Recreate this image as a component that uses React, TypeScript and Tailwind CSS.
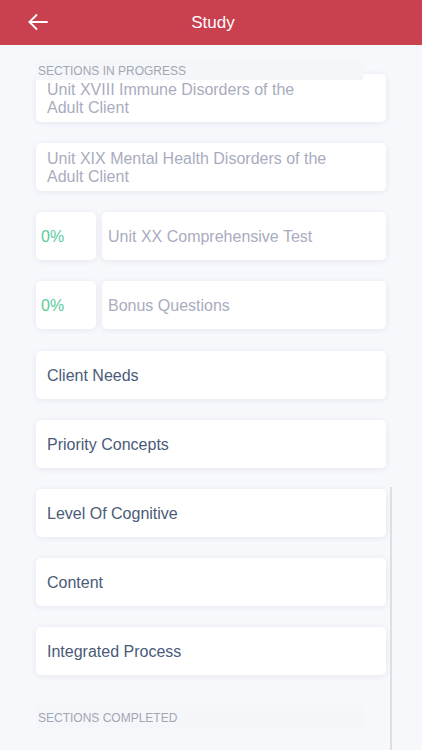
import React from "react";

const font = { fontFamily: '"Liberation Sans", Arial, sans-serif' };

function Card({ children, className = "" }: { children: React.ReactNode; className?: string }) {
  return (
    <div
      className={
        "bg-white rounded-[5px] h-[48px] flex items-center pt-[2px] shadow-[0_1px_6px_rgba(60,70,100,0.09)] " + className
      }
    >
      {children}
    </div>
  );
}

export default function App() {
  const plain = ["Client Needs", "Priority Concepts", "Level Of Cognitive", "Content", "Integrated Process"];
  return (
    <div style={font} className="relative w-[422px] h-[750px] overflow-hidden bg-[#f7f8fc]">
      <div className="h-[45px] bg-[#c9404f] flex items-center justify-center relative">
        <svg
          className="absolute left-[27px] top-[13px]"
          width="22"
          height="18"
          viewBox="0 0 22 18"
          fill="none"
          stroke="white"
          strokeWidth="1.8"
          strokeLinecap="round"
          strokeLinejoin="round"
        >
          <path d="M20 9H2.5" />
          <path d="M9.5 2L2.5 9l7 7" />
        </svg>
        <span className="text-white text-[17px] pl-[4px]">Study</span>
      </div>

      <div className="px-[36px] pt-[16px] flex flex-col">
        <div className="-mb-[6px] relative z-10">
          <div className="w-[327px] h-[19px] bg-[#f4f6fa] flex items-center pl-[2px] text-[12px] leading-none text-[#a2a6b2]">
            SECTIONS IN PROGRESS
          </div>
        </div>
        <div className="flex flex-col gap-[21px]">
          <Card className="px-[11px]">
            <span className="text-[16px] leading-[18px] text-[#a9acbe]">
              Unit XVIII Immune Disorders of the
              <br />
              Adult Client
            </span>
          </Card>
          <Card className="px-[11px]">
            <span className="text-[16px] leading-[18px] text-[#a9acbe]">
              Unit XIX Mental Health Disorders of the
              <br />
              Adult Client
            </span>
          </Card>
          {["Unit XX Comprehensive Test", "Bonus Questions"].map((t) => (
            <div key={t} className="flex gap-[6px]">
              <Card className="w-[60px] px-[5px]">
                <span className="text-[16px] text-[#5ccb9b]">0%</span>
              </Card>
              <Card className="flex-1 px-[6px]">
                <span className="text-[16px] text-[#a9acbe]">{t}</span>
              </Card>
            </div>
          ))}
          <div className="flex flex-col gap-[21px] mt-[1px]">
            {plain.map((t) => (
              <Card key={t} className="px-[11px]">
                <span className="text-[16px] text-[#4a5b78]">{t}</span>
              </Card>
            ))}
          </div>
        </div>
        <div className="mt-[30px]">
          <div className="w-[327px] h-[24px] bg-[#f5f6fa] flex items-center pl-[2px] pt-[2px] text-[12px] leading-none text-[#a2a6b2]">
            SECTIONS COMPLETED
          </div>
        </div>
      </div>

      <div className="absolute left-[390px] top-[487px] w-[2px] h-[263px] bg-[#dedee3]" />
    </div>
  );
}
